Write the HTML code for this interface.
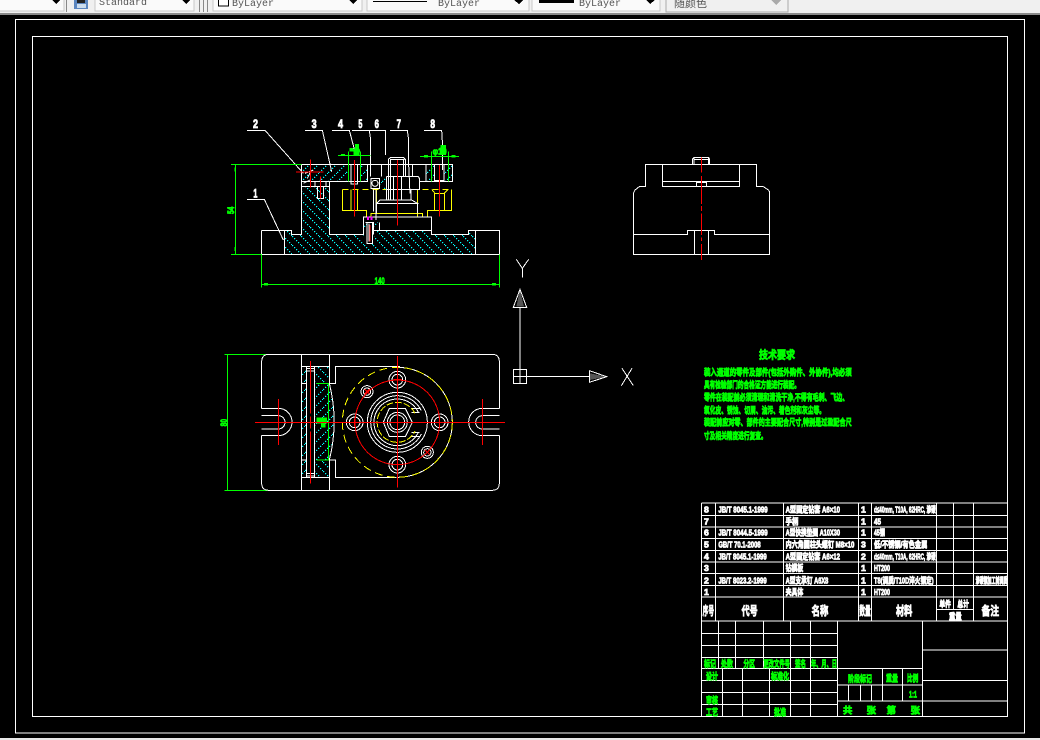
<!DOCTYPE html>
<html><head><meta charset="utf-8"><style>
html,body{margin:0;padding:0;background:#000;width:1040px;height:740px;overflow:hidden}
svg{display:block;position:absolute;left:0;top:0}
text{font-family:"Liberation Sans","Noto Sans CJK SC",sans-serif}
.w{fill:none;stroke:#fff;stroke-width:3}
.g{fill:none;stroke:#0f0;stroke-width:3}
.r{fill:none;stroke:#f00;stroke-width:3}
.y{fill:none;stroke:#ff0;stroke-width:3}
.tw text{fill:#fff;font-weight:700;font-size:26px;stroke:#fff;stroke-width:2.5}
.tg text{fill:#0f0;font-weight:700;font-size:28px;stroke:#0f0;stroke-width:2.5}
.tb text{font-family:"Liberation Mono","Noto Sans CJK SC",monospace;font-size:10px;fill:#555}
</style></head><body>
<svg width="1040" height="740" viewBox="0 0 1040 740" xmlns="http://www.w3.org/2000/svg" shape-rendering="crispEdges">
<defs>
<pattern id="hb" patternUnits="userSpaceOnUse" width="27" height="27"><path d="M0 0L27 27" stroke="#0ff" stroke-width="2.4" stroke-dasharray="4.500 4" fill="none"/></pattern>
<pattern id="hf" patternUnits="userSpaceOnUse" width="27" height="27"><path d="M0 27L27 0" stroke="#0ff" stroke-width="2.4" stroke-dasharray="4.500 4" fill="none"/></pattern>
</defs>
<rect width="1040" height="740" fill="#000"/>
<!-- toolbar -->
<rect x="0" y="0" width="1040" height="13" fill="#f0f0f0"/>
<rect x="0" y="13" width="1040" height="2" fill="#8a8a8a"/>
<rect x="0" y="738" width="1040" height="2" fill="#e8e8e8"/>
<g fill="#fafafa" stroke="#c8c8c8">
<rect x="-2" y="-2" width="66" height="13"/>
<rect x="95" y="-2" width="99" height="13"/>
<rect x="213" y="-2" width="149" height="13"/>
<rect x="367" y="-2" width="162" height="13"/>
<rect x="532" y="-2" width="128" height="13"/>
</g>
<rect x="666" y="-2" width="122" height="14" fill="#f0f0f0" stroke="#aaa"/>
<g fill="#888"><rect x="66" y="0" width="1" height="12"/><rect x="199" y="0" width="1" height="12"/><rect x="203" y="0" width="1" height="12"/><rect x="207" y="0" width="1" height="12"/></g>
<rect x="74" y="0" width="14" height="9" fill="#5b86c0"/><rect x="77" y="0" width="8" height="3" fill="#222"/><rect x="77" y="4" width="9" height="4" fill="#cde"/>
<g fill="#000">
<polygon points="52,0 60,0 56,4"/><polygon points="182,0 190,0 186,4"/><polygon points="349,0 357,0 353,4"/><polygon points="514,0 523,0 519,4"/><polygon points="646,0 655,0 650,4"/>
</g>
<polygon points="771,0 781,0 776,5" fill="#aaa"/>
<rect x="218.500" y="-2" width="10" height="8" fill="#fff" stroke="#000"/>
<rect x="373" y="1" width="54" height="1" fill="#000"/>
<rect x="539" y="0" width="35" height="3" fill="#000"/>
<g class="tb">
<text x="99" y="5">Standard</text>
<text x="232" y="6">ByLayer</text>
<text x="438" y="6">ByLayer</text>
<text x="579" y="6">ByLayer</text>
<text x="674" y="7" fill="#777" style="font-size:11px">随颜色</text>
</g>
<!-- frames -->
<rect x="15.500" y="19.500" width="1009" height="713.500" fill="none" stroke="#fff"/>
<rect x="32.500" y="36.500" width="975" height="680" fill="none" stroke="#fff"/>

<!-- front view -->
<g transform="translate(220 110) scale(.33333)">
<polygon fill="url(#hb)" points="193,361 215,361 215,373 245,373 245,229 328,229 328,373 430,373 430,400 462,400 462,361 634,361 634,373 745,373 745,361 766,361 766,433 193,433"/>
<polygon fill="url(#hf)" points="248,163 385,163 385,215 248,215"/>
<polygon fill="url(#hf)" points="421,163 443,163 443,215 421,215"/>
<polygon fill="url(#hf)" points="618,163 643,163 643,215 618,215"/>
<polygon fill="url(#hf)" points="672,163 698,163 698,215 672,215"/>
<polygon fill="url(#hf)" points="478,205 500,205 500,237 478,237"/>
<polygon fill="url(#hf)" points="430,337 441,337 441,362 430,362"/>
<polygon fill="url(#hf)" points="462,337 478,337 478,360 462,360"/>
<g class="y">
<path d="M367 238V302H440V321M413 238V302M393 238V302M470 238V280M592 238V321M453 321V310H607V321M695 238V302H622V321M643 302V250H673V302M635 238L645 250M685 238L673 250"/>
<path d="M367 238H695" stroke-dasharray="18 12"/>
</g>
<g class="w">
<path d="M124 361V433H838V361H745V373H634V321H430V373H328V215H245M124 361H215V373H245V163H698V215H598"/>
<path d="M193 361V433M766 361V433M245 229H328M328 215H443V163M385 163V215M421 163V215M462 361H634M460 373V337"/>
<path d="M393 163V222H413V163M643 163V212H672V163M618 163V215M643 215H598"/>
<path d="M285 229V215H318V229M292 229V265H310V229"/>
<path d="M505 270V148L512 142H550L556 148V200M510 148H553M512 148V200M550 148V200"/>
<path d="M485 163V200M577 163V200M500 200H595L598 205V238H500V200M500 200V270M512 200V270M520 200V270M545 200V270M573 238V270M480 270H575L592 280H470L480 270M470 280V310M592 280V310"/>
<path d="M453 205H478V235H453ZM460 238V305M468 238V330"/>
<path d="M430 321V373M437 337H462M441 337V400H458V337M447 340V395M430 337V362M478 337V360"/>
<circle cx="465" cy="220" r="9"/>
<path d="M255 190L280 180M262 205L272 185M250 220L270 210"/>
<path d="M81 61H135L250 190M255 61H307L335 185M336 61H388L405 125M396 61H448L452 90V200M448 61H497V135M510 61H562L566 90V165L570 250M612 61H665L668 110V180M81 268H133L190 390"/>
</g>
<g class="r">
<path d="M404 150V320M532 150V347M658 165V320M271 148V232M228 186H311M301 200V265M450 345V395"/>
</g>
<rect x="441" y="320" width="6" height="10" fill="#f0f"/><rect x="452" y="320" width="6" height="10" fill="#f0f"/>
<g class="g">
<path d="M33 163H245M33 433H124M46 163V433M124 433V533M838 433V533M124 523H838"/>
<path d="M354 136H452M385 125V215M421 125V215M600 139H717M634 125V215M685 125V215"/>
</g>
<g fill="#0f0"><rect x="132" y="519" width="12" height="8"/><rect x="816" y="519" width="12" height="8"/><rect x="43" y="173" width="5" height="12"/><rect x="43" y="411" width="5" height="12"/><rect x="363" y="132" width="12" height="6"/><rect x="612" y="135" width="12" height="8"/><rect x="694" y="135" width="12" height="8"/><rect x="400" y="118" width="18" height="18"/><rect x="405" y="102" width="12" height="20"/><rect x="388" y="114" width="12" height="10"/><rect x="662" y="105" width="16" height="30"/></g>
<g class="tg">
<text x="400" y="130" textLength="20" lengthAdjust="spacingAndGlyphs">φ</text>
<text x="638" y="133" textLength="42" lengthAdjust="spacingAndGlyphs">φ10</text>
<text x="464" y="522" textLength="30" lengthAdjust="spacingAndGlyphs">140</text>
<text transform="translate(42 312) rotate(-90)" textLength="22" lengthAdjust="spacingAndGlyphs">54</text>
</g>
<g class="tw">
<text x="99" y="54" textLength="15" lengthAdjust="spacingAndGlyphs" style="font-size:36px">2</text>
<text x="275" y="54" textLength="15" lengthAdjust="spacingAndGlyphs" style="font-size:36px">3</text>
<text x="354" y="54" textLength="15" lengthAdjust="spacingAndGlyphs" style="font-size:36px">4</text>
<text x="415" y="54" textLength="12" lengthAdjust="spacingAndGlyphs" style="font-size:36px">5</text>
<text x="464" y="54" textLength="13" lengthAdjust="spacingAndGlyphs" style="font-size:36px">6</text>
<text x="530" y="54" textLength="13" lengthAdjust="spacingAndGlyphs" style="font-size:36px">7</text>
<text x="631" y="54" textLength="14" lengthAdjust="spacingAndGlyphs" style="font-size:36px">8</text>
<text x="100" y="262" textLength="12" lengthAdjust="spacingAndGlyphs" style="font-size:36px">1</text>
</g>
</g>

<!-- side view -->
<g transform="translate(620 145) scale(.33333)">
<g class="w">
<path d="M40 328H449V140L445 135L430 125H409V58H76V125H58L45 135L40 145Z"/>
<path d="M127 58V124H359V58M127 109H359M229 124V112H260V124"/>
<path d="M217 58V43L222 38H266L269 43V58M222 43H266M222 38V58M266 38V58"/>
<path d="M40 268H202V256H283V268H449M223 256V328M265 256V328"/>
</g>
<path class="r" d="M244 38V83M244 93V177M244 183V198M244 205V270M244 277V288M244 297V345"/>
</g>

<!-- UCS -->
<g transform="translate(500 250) scale(.33333)">
<polygon points="60,118 49,170 72,170" fill="#555"/>
<polygon points="320,380 270,370 270,390" fill="#555"/>
<g class="w">
<path d="M40 358H80V400H40ZM60 358V400M40 380H80M60 172V358M60 118L40 172H80ZM80 380H268M268 362V397L320 380Z"/>
<path d="M49 28L67 55L86 28M67 55V83M366 355L400 407M396 355L364 407"/>
</g>
</g>

<!-- top view -->
<g transform="translate(215 345) scale(.33333)">
<polygon fill="url(#hf)" points="259,65 275,65 275,397 259,397"/>
<polygon fill="url(#hf)" points="298,115 340,115 352,170 358,232 352,290 340,345 298,345"/>
<polygon fill="url(#hb)" points="298,65 343,65 343,115 298,115"/>
<polygon fill="url(#hb)" points="298,345 343,345 343,397 298,397"/>
<g class="g"><path d="M28 28H259M28 436H259M38 28V436M305 115H343M340 115V345M305 345H343"/></g>
<rect x="304" y="217" width="32" height="18" fill="#0f0"/><rect x="318" y="232" width="14" height="16" fill="#0f0"/>
<g class="tg"><text transform="translate(36 244) rotate(-90)" textLength="22" lengthAdjust="spacingAndGlyphs">80</text></g>
<g class="w">
<path d="M140 190V50Q140 28 162 28H831Q853 28 853 50V190M140 272V414Q140 436 162 436H831Q853 436 853 414V272"/>
<path d="M140 190H190A41 41 0 0 1 190 272H140M140 212H190A20 20 0 0 1 190 252H140"/>
<path d="M853 190H802A41 41 0 0 0 802 272H853M853 212H802A20 20 0 0 0 802 252H853"/>
<path d="M259 28V436M343 28V115M343 345V436M259 65H343M259 397H343M275 65V397M298 65V397M275 70H298M275 78H298M275 385H298M275 393H298M259 115H275M259 345H275"/>
<path d="M343 115Q372 230 343 345"/>
<path d="M343 115H361V65H555M343 345H361V397H545"/>
<path d="M547 67A165 165 0 0 1 547 397"/>
<circle cx="547" cy="104" r="25"/><circle cx="547" cy="104" r="16"/>
<circle cx="547" cy="359" r="25"/><circle cx="547" cy="359" r="16"/>
<circle cx="419" cy="232" r="25"/><circle cx="419" cy="232" r="16"/>
<circle cx="674" cy="232" r="25"/><circle cx="674" cy="232" r="16"/>
<circle cx="456" cy="140" r="18"/><circle cx="456" cy="140" r="11"/>
<circle cx="637" cy="322" r="18"/><circle cx="637" cy="322" r="11"/>
<circle cx="547" cy="232" r="90"/>
<path d="M619 197A80 80 0 1 0 619 267M610 202A70 70 0 1 0 610 262M590 190H615M590 202H613M590 262H613M590 274H615"/>
<path d="M523 190H571L592 232L571 275H523L505 232Z"/>
<circle cx="547" cy="232" r="30"/><circle cx="547" cy="232" r="22"/>
</g>
<g class="y">
<circle cx="547" cy="232" r="165" stroke-dasharray="24 14"/>
<path d="M600 205A60 60 0 1 0 600 259" stroke-dasharray="20 6"/>
</g>
<g class="r">
<circle cx="547" cy="232" r="127"/>
<path d="M120 232H870M547 33V428M190 162V300M802 162V300M286 48V205M286 215V250M286 260V415"/>
<path d="M535 104H559M547 92V116M535 359H559M547 347V371M407 232H431M419 220V244M662 232H686M674 220V244"/>
<path d="M449 133L463 147M463 133L449 147M630 315L644 329M644 315L630 329"/>
</g>
</g>

<!-- technical requirements -->
<g transform="translate(695 340) scale(.33333)" class="tg">
<text x="192" y="56" textLength="108" lengthAdjust="spacingAndGlyphs" style="font-size:33px">技术要求</text>
<text x="27" y="107" textLength="443" lengthAdjust="spacingAndGlyphs">装入通道的零件及部件(包括外购件、外协件),均必须</text>
<text x="27" y="144" textLength="288" lengthAdjust="spacingAndGlyphs">具有检验部门的合格证方能进行装配。</text>
<text x="27" y="181" textLength="433" lengthAdjust="spacingAndGlyphs">零件在装配前必须清理和清洗干净,不得有毛刺、飞边、</text>
<text x="27" y="220" textLength="363" lengthAdjust="spacingAndGlyphs">氧化皮、锈蚀、切屑、油污、着色剂和灰尘等。</text>
<text x="27" y="257" textLength="443" lengthAdjust="spacingAndGlyphs">装配前应对零、部件的主要配合尺寸,特别是过盈配合尺</text>
<text x="27" y="297" textLength="188" lengthAdjust="spacingAndGlyphs">寸及相关精度进行复查。</text>
</g>

<!-- parts list -->
<g transform="translate(695 495) scale(.33333)">
<g class="w">
<path d="M20 24H937M20 62H937M20 96H937M20 131H937M20 166H937M20 201H937M20 236H937M20 271H937M20 306H937M20 24V378M61 24V378M265 24V378M491 24V378M529 24V378M725 24V378M776 24V343M835 24V378M937 24V378M725 343H835"/>
</g>
<g class="tw">
<text x="27" y="52">8</text><text x="27" y="88">7</text><text x="27" y="122">6</text><text x="27" y="158">5</text><text x="27" y="193">4</text><text x="27" y="228">3</text><text x="27" y="265">2</text><text x="27" y="300">1</text>
<text x="70" y="52" textLength="148" lengthAdjust="spacingAndGlyphs">JB/T 8045.1-1999</text>
<text x="70" y="122" textLength="148" lengthAdjust="spacingAndGlyphs">JB/T 8044.5-1999</text>
<text x="70" y="158" textLength="127" lengthAdjust="spacingAndGlyphs">GB/T 70.1-2008</text>
<text x="70" y="193" textLength="145" lengthAdjust="spacingAndGlyphs">JB/T 8045.1-1999</text>
<text x="70" y="265" textLength="145" lengthAdjust="spacingAndGlyphs">JB/T 8023.2-1999</text>
<text x="272" y="52" textLength="163" lengthAdjust="spacingAndGlyphs">A型固定钻套 A6×10</text>
<text x="272" y="88" textLength="38" lengthAdjust="spacingAndGlyphs">手柄</text>
<text x="272" y="122" textLength="163" lengthAdjust="spacingAndGlyphs">A型快换垫圈 A10X30</text>
<text x="272" y="158" textLength="206" lengthAdjust="spacingAndGlyphs">内六角圆柱头螺钉 M8×10</text>
<text x="272" y="193" textLength="163" lengthAdjust="spacingAndGlyphs">A型固定钻套 A6×12</text>
<text x="272" y="228" textLength="53" lengthAdjust="spacingAndGlyphs">钻模板</text>
<text x="272" y="265" textLength="128" lengthAdjust="spacingAndGlyphs">A型支承钉 A6X8</text>
<text x="272" y="300" textLength="53" lengthAdjust="spacingAndGlyphs">夹具体</text>
<text x="498" y="52">1</text><text x="498" y="88">1</text><text x="498" y="122">1</text><text x="498" y="158">3</text><text x="498" y="193">2</text><text x="498" y="228">1</text><text x="498" y="265">1</text><text x="498" y="300">1</text>
<text x="537" y="52" textLength="185" lengthAdjust="spacingAndGlyphs">d≤40mm, T10A, 62HRC, 渗碳</text>
<text x="537" y="88" textLength="21" lengthAdjust="spacingAndGlyphs">45</text>
<text x="537" y="122" textLength="33" lengthAdjust="spacingAndGlyphs">45钢</text>
<text x="537" y="158" textLength="160" lengthAdjust="spacingAndGlyphs">低/不锈钢/有色金属</text>
<text x="537" y="193" textLength="185" lengthAdjust="spacingAndGlyphs">d≤40mm, T10A, 62HRC, 渗碳</text>
<text x="537" y="228" textLength="48" lengthAdjust="spacingAndGlyphs">HT200</text>
<text x="537" y="265" textLength="179" lengthAdjust="spacingAndGlyphs">T8(调质/T10D淬火钢定)</text>
<text x="537" y="300" textLength="48" lengthAdjust="spacingAndGlyphs">HT200</text>
<text x="842" y="265" textLength="95" lengthAdjust="spacingAndGlyphs">渗碳钢加工前调质</text>
<text x="23" y="360" textLength="34" lengthAdjust="spacingAndGlyphs" style="font-size:36px">序号</text>
<text x="140" y="360" textLength="48" lengthAdjust="spacingAndGlyphs" style="font-size:36px">代号</text>
<text x="350" y="360" textLength="50" lengthAdjust="spacingAndGlyphs" style="font-size:36px">名称</text>
<text x="493" y="360" textLength="34" lengthAdjust="spacingAndGlyphs" style="font-size:36px">数量</text>
<text x="603" y="360" textLength="49" lengthAdjust="spacingAndGlyphs" style="font-size:36px">材料</text>
<text x="733" y="336" textLength="35" lengthAdjust="spacingAndGlyphs">单件</text>
<text x="787" y="336" textLength="35" lengthAdjust="spacingAndGlyphs">总计</text>
<text x="762" y="374" textLength="38" lengthAdjust="spacingAndGlyphs">重量</text>
<text x="860" y="360" textLength="52" lengthAdjust="spacingAndGlyphs" style="font-size:36px">备注</text>
</g>
</g>

<!-- title block -->
<g transform="translate(695 615) scale(.33333)">
<g class="w">
<path d="M20 18H937M20 55H427M20 91H427M20 127H427M20 160H682M20 196H427M20 232H427M20 268H427M20 18V304M70 18V160M121 18V160M205 18V160M286 18V304M346 18V304M427 18V304M682 18V304M83 160V304M142 160V304M223 160V304M682 105H937M682 196H937M427 258H937M427 210H682M562 160V258M622 160V258M461 210V258M497 210V258M529 210V258"/>
</g>
<g class="tg">
<text x="27" y="156" textLength="36" lengthAdjust="spacingAndGlyphs">标记</text>
<text x="78" y="156" textLength="36" lengthAdjust="spacingAndGlyphs">处数</text>
<text x="145" y="156" textLength="35" lengthAdjust="spacingAndGlyphs">分区</text>
<text x="205" y="156" textLength="80" lengthAdjust="spacingAndGlyphs">更改文件号</text>
<text x="300" y="156" textLength="33" lengthAdjust="spacingAndGlyphs">签名</text>
<text x="348" y="156" textLength="78" lengthAdjust="spacingAndGlyphs">年、月、日</text>
<text x="33" y="193" textLength="36" lengthAdjust="spacingAndGlyphs">设计</text>
<text x="228" y="193" textLength="54" lengthAdjust="spacingAndGlyphs">标准化</text>
<text x="33" y="265" textLength="36" lengthAdjust="spacingAndGlyphs">审核</text>
<text x="33" y="301" textLength="36" lengthAdjust="spacingAndGlyphs">工艺</text>
<text x="237" y="301" textLength="36" lengthAdjust="spacingAndGlyphs">批准</text>
<text x="459" y="201" textLength="72" lengthAdjust="spacingAndGlyphs">阶段标记</text>
<text x="573" y="199" textLength="36" lengthAdjust="spacingAndGlyphs">重量</text>
<text x="636" y="199" textLength="34" lengthAdjust="spacingAndGlyphs">比例</text>
<text x="642" y="248" textLength="24" lengthAdjust="spacingAndGlyphs">1:1</text>
<text x="444" y="295">共</text><text x="515" y="295">张</text><text x="575" y="295">第</text><text x="647" y="295">张</text>
</g>
</g>
</svg>
</body></html>
